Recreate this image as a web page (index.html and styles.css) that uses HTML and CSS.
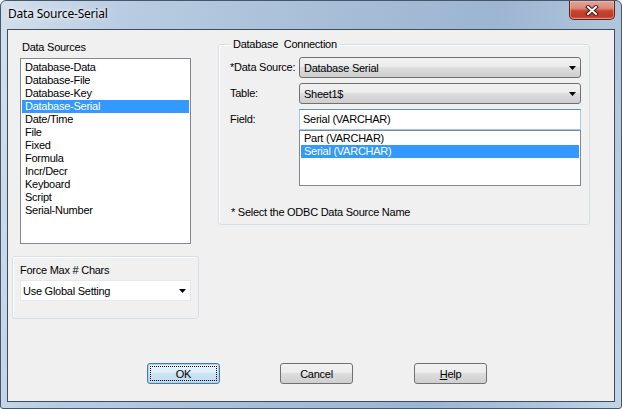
FILE: index.html
```html
<!DOCTYPE html>
<html>
<head>
<meta charset="utf-8">
<title>Data Source-Serial</title>
<link rel="stylesheet" href="styles.css">
</head>
<body>
<div class="window">
  <div class="titlebar">
    <span class="title">Data Source-Serial</span>
    <div class="close">
      <svg width="14" height="11" viewBox="0 0 14 11">
        <path d="M3 2 L11 9 M11 2 L3 9" stroke="#3a1a14" stroke-width="4" stroke-linecap="square"/>
        <path d="M3 2 L11 9 M11 2 L3 9" stroke="#ffffff" stroke-width="2" stroke-linecap="square"/>
      </svg>
    </div>
  </div>
  <div class="client">
    <div class="top">
      <div class="leftcol">
        <div class="lbl ds-label">Data Sources</div>
        <div class="listbox sources">
          <div class="item">Database-Data</div>
          <div class="item">Database-File</div>
          <div class="item">Database-Key</div>
          <div class="item sel">Database-Serial</div>
          <div class="item">Date/Time</div>
          <div class="item">File</div>
          <div class="item">Fixed</div>
          <div class="item">Formula</div>
          <div class="item">Incr/Decr</div>
          <div class="item">Keyboard</div>
          <div class="item">Script</div>
          <div class="item">Serial-Number</div>
        </div>
        <div class="group force">
          <div class="lbl">Force Max # Chars</div>
          <div class="flatcombo">
            <span>Use Global Setting</span>
            <svg class="arrow" width="7" height="4" viewBox="0 0 7 4"><path d="M0 0 H7 L3.5 4 Z" fill="#000"/></svg>
          </div>
        </div>
      </div>
      <div class="group conn">
        <span class="legend">Database&nbsp; Connection</span>
        <div class="row">
          <span class="flabel">*Data Source:</span>
          <div class="combo">
            <span>Database Serial</span>
            <svg class="arrow" width="7" height="4" viewBox="0 0 7 4"><path d="M0 0 H7 L3.5 4 Z" fill="#000"/></svg>
          </div>
        </div>
        <div class="row">
          <span class="flabel">Table:</span>
          <div class="combo">
            <span>Sheet1$</span>
            <svg class="arrow" width="7" height="4" viewBox="0 0 7 4"><path d="M0 0 H7 L3.5 4 Z" fill="#000"/></svg>
          </div>
        </div>
        <div class="row field">
          <span class="flabel">Field:</span>
          <div class="fieldcol">
            <div class="edit">Serial (VARCHAR)</div>
            <div class="listbox fieldlist">
              <div class="item">Part (VARCHAR)</div>
              <div class="item sel">Serial (VARCHAR)</div>
            </div>
          </div>
        </div>
        <div class="note">* Select the ODBC Data Source Name</div>
      </div>
    </div>
    <div class="buttons">
      <div class="btn ok"><span class="focus">OK</span></div>
      <div class="btn cancel">Cancel</div>
      <div class="btn help"><span><u>H</u>elp</span></div>
    </div>
  </div>
</div>
</body>
</html>
```
FILE: styles.css
```css
html, body {
  margin: 0;
  padding: 0;
  background: #ffffff;
}
body {
  font-family: "Liberation Sans", Arial, sans-serif;
  font-size: 11px;
  letter-spacing: -0.25px;
  color: #000;
}
.window {
  width: 622px;
  height: 409px;
  box-sizing: border-box;
  border: 1px solid #46566a;
  border-radius: 6px 6px 3px 3px;
  padding: 0 6px 6px;
  background: linear-gradient(100deg, #d3e0ed 0%, #b9cce1 18%, #a9bfd8 45%, #9cb5d1 72%, #b1c6dd 90%, #c4d5e6 100%);
  display: flex;
  flex-direction: column;
  overflow: hidden;
}
.titlebar {
  height: 28px;
  display: flex;
  align-items: flex-start;
}
.title {
  font-family: "Noto Sans", "Open Sans", sans-serif;
  font-size: 12px;
  letter-spacing: -0.2px;
  line-height: 16px;
  margin-top: 5px;
  padding-left: 1px;
  color: #000;
  text-shadow: 0 0 6px rgba(255,255,255,0.9), 0 0 3px rgba(255,255,255,0.8);
}
.close {
  margin-left: auto;
  width: 46px;
  height: 19px;
  box-sizing: border-box;
  border: 1px solid #5e241b;
  border-top: none;
  border-radius: 0 0 5px 5px;
  background: linear-gradient(#e3a394 0%, #d98c7b 40%, #c8452f 55%, #c0392b 85%, #d2674f 100%);
  box-shadow: inset 0 0 0 1px rgba(255,200,190,0.45);
  display: flex;
  align-items: center;
  justify-content: center;
}
.client {
  height: 373px;
  box-sizing: border-box;
  border: 1px solid #3f4c5c;
  background: #f0f0f0;
  display: flex;
  flex-direction: column;
}
.top {
  display: flex;
  align-items: flex-start;
}
.leftcol {
  margin-left: 4px;
  width: 187px;
  display: flex;
  flex-direction: column;
}
.lbl {
  line-height: 13px;
  white-space: nowrap;
}
.ds-label {
  margin: 11px 0 0 10px;
}
.listbox {
  background: #fff;
  border: 1px solid #828790;
  box-sizing: border-box;
}
.sources {
  margin: 4px 0 0 8px;
  width: 171px;
  height: 186px;
  padding: 2px 1px;
}
.item {
  height: 13px;
  line-height: 13px;
  padding-left: 3px;
  white-space: nowrap;
}
.item.sel {
  background: #3399ff;
  color: #fff;
}
.group {
  border: 1px solid #d5dfe5;
  border-radius: 3px;
  box-shadow: inset 1px 1px 0 #ffffff;
  box-sizing: border-box;
}
.force {
  margin-top: 12px;
  width: 187px;
  height: 63px;
  padding: 7px 0 0 7px;
}
.flatcombo {
  margin-top: 3px;
  width: 171px;
  height: 21px;
  box-sizing: border-box;
  background: #fff;
  border: 1px solid #e3e9ef;
  display: flex;
  align-items: center;
  justify-content: space-between;
  padding: 0 4px 0 2px;
  white-space: nowrap;
}
.arrow {
  display: block;
  flex: none;
}
.conn {
  position: relative;
  margin: 14px 0 0 19px;
  width: 372px;
  height: 181px;
  padding: 12px 8px 0 11px;
  display: flex;
  flex-direction: column;
}
.legend {
  position: absolute;
  top: -7px;
  left: 12px;
  padding: 0 2px;
  line-height: 13px;
  background: #f0f0f0;
  white-space: nowrap;
}
.row {
  display: flex;
  align-items: center;
  height: 21px;
}
.row + .row {
  margin-top: 5px;
}
.row.field {
  align-items: flex-start;
  height: auto;
}
.flabel {
  width: 69px;
  flex: none;
  white-space: nowrap;
  line-height: 21px;
}
.combo {
  width: 282px;
  height: 21px;
  box-sizing: border-box;
  border: 1px solid #707070;
  border-radius: 3px;
  background: linear-gradient(#f2f2f2 0%, #ebebeb 50%, #dddddd 50%, #cfcfcf 100%);
  display: flex;
  align-items: center;
  justify-content: space-between;
  padding: 0 4px;
  white-space: nowrap;
}
.fieldcol {
  display: flex;
  flex-direction: column;
  width: 282px;
}
.edit {
  height: 21px;
  box-sizing: border-box;
  border: 1px solid #a4c9e3;
  border-top-color: #5b8fbd;
  background: #fff;
  padding-left: 3px;
  line-height: 19px;
  white-space: nowrap;
}
.fieldlist {
  height: 56px;
  padding: 1px;
}
.note {
  margin: 20px 0 0 1px;
  line-height: 13px;
  white-space: nowrap;
}
.buttons {
  display: flex;
  margin-top: 44px;
  padding-left: 139px;
}
.btn {
  width: 73px;
  height: 21px;
  box-sizing: border-box;
  border: 1px solid #707070;
  border-radius: 3px;
  background: linear-gradient(#f2f2f2 0%, #ebebeb 50%, #dddddd 50%, #cfcfcf 100%);
  display: flex;
  align-items: center;
  justify-content: center;
  white-space: nowrap;
}
.btn.ok {
  border-color: #3c7fb1;
  background: linear-gradient(#e8f4fb 0%, #dcedf8 50%, #cce4f3 50%, #bcdcef 100%);
  box-shadow: inset 0 0 0 1px #a9d3ef;
  padding: 2px;
}
.focus {
  flex: 1;
  align-self: stretch;
  border: 1px dotted #000;
  display: flex;
  align-items: center;
  justify-content: center;
}
.btn.cancel {
  margin-left: 60px;
}
.btn.help {
  margin-left: 61px;
}
```
